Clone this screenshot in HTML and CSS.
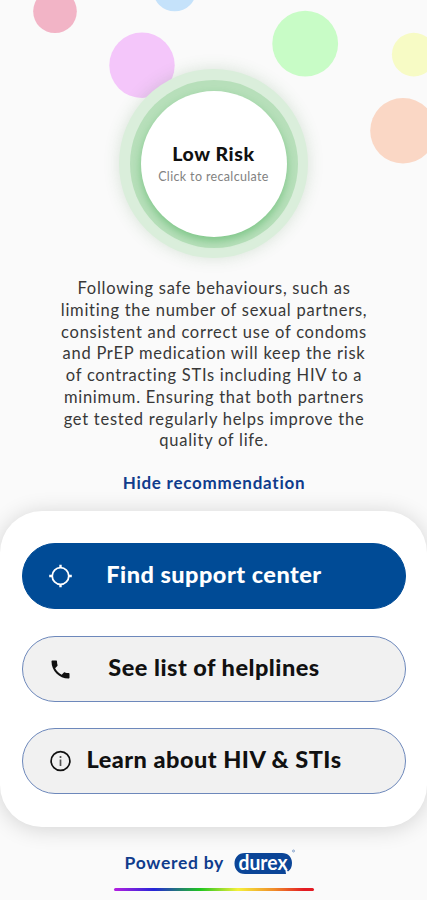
FILE: index.html
```
<!DOCTYPE html>
<html lang="en">
<head>
  <meta charset="UTF-8" />
  <meta name="viewport" content="width=device-width, initial-scale=1.0" />
  <title>Risk calculator</title>
  <link rel="stylesheet" href="styles.css">
</head>
<body>
<div class="bubbles">
  <svg width="427" height="200" viewBox="0 0 427 200">
    <circle cx="55" cy="11.3" r="21.8" fill="#f2b4c6" />
    <circle cx="174.7" cy="-10.5" r="21.8" fill="#c5e2fa" />
    <circle cx="142" cy="65.3" r="32.7" fill="#f4c6fa" />
    <circle cx="305.2" cy="43.7" r="32.9" fill="#c8fcc6" />
    <circle cx="413.7" cy="54.6" r="21.8" fill="#f7fbc5" />
    <circle cx="403" cy="130.7" r="32.8" fill="#fad7c5" />
  </svg>
</div>
<main>
  <div class="risk">
    <div class="ring">
      <div class="inner">
        <h1>Low Risk</h1>
        <p>Click to recalculate</p>
      </div>
    </div>
  </div>
  <p class="advice">
    Following safe behaviours, such as<br>
    limiting the number of sexual partners,<br>
    consistent and correct use of condoms<br>
    and PrEP medication will keep the risk<br>
    of contracting STIs including HIV to a<br>
    minimum. Ensuring that both partners<br>
    get tested regularly helps improve the<br>
    quality of life.
  </p>
  <a class="toggle">Hide recommendation</a>
  <section class="card">
    <a class="btn primary">
      <svg width="24" height="24" viewBox="0 0 24 24" fill="none" stroke="currentColor" stroke-width="1.8">
        <circle cx="12.5" cy="12" r="8.3" />
        <path d="M12.5 .7v3M12.5 20.300v3M1.200 12h3M20.800 12h3" stroke-width="2.4" />
      </svg>
      <span>Find support center</span>
    </a>
    <a class="btn">
      <svg width="24" height="24" viewBox="0 0 24 24" fill="currentColor">
        <path transform="translate(.5 .5)" d="M20 15.500c-1.200 0-2.400-.2-3.600-.6-.3-.1-.7 0-1 .2l-2.200 2.200c-2.800-1.400-5.100-3.800-6.600-6.600l2.200-2.200c.3-.3.4-.7.2-1C8.700 6.400 8.500 5.200 8.500 4c0-.6-.4-1-1-1H4c-.6 0-1 .4-1 1 0 9.400 7.600 17 17 17 .6 0 1-.4 1-1v-3.500c0-.6-.4-1-1-1z" />
      </svg>
      <span>See list of helplines</span>
    </a>
    <a class="btn">
      <svg width="24" height="24" viewBox="0 0 24 24" fill="none" stroke="currentColor" stroke-width="1.7">
        <circle cx="12.5" cy="12" r="9.4" />
        <path d="M12.5 10.500v6.500M12.500 7v2" stroke="#555" />
      </svg>
      <span>Learn about HIV &amp; STIs</span>
    </a>
  </section>
  <footer>
    <div class="powered">
      <span>Powered by</span>
      <svg width="62" height="28" viewBox="0 0 62 28">
        <path d="M11 5h37c6 0 10 4 10 10 0 4-1.500 7-4 8.500l-3-4 1 6.500H11C4 26 .5 21 .5 15.500S4 5 11 5z" fill="#0b4597" />
        <text x="4.5" y="22" textLength="49" lengthAdjust="spacingAndGlyphs">durex</text>
        <circle cx="59.500" cy="3" r="1" fill="none" stroke="#6c8fc2" stroke-width=".8" />
      </svg>
    </div>
    <div class="rainbow"></div>
  </footer>
</main>
</body>
</html>
```
FILE: styles.css
```
* {
  margin: 0;
  padding: 0;
  box-sizing: border-box;
}
body {
  height: 900px;
  background: #fafafa;
  font-family: Lato, "Liberation Sans", sans-serif;
  color: #111;
  overflow: hidden;
}
.bubbles {
  position: absolute;
  top: 0;
  left: 0;
}
main {
  position: relative;
  display: flex;
  flex-direction: column;
  align-items: center;
  height: 900px;
  padding-top: 69px;
}
.risk,
.ring,
.inner {
  display: flex;
  align-items: center;
  justify-content: center;
  flex-shrink: 0;
  border-radius: 50%;
}
.risk {
  width: 189px;
  height: 189px;
  background: #daeedb;
  box-shadow: 0 0 16px rgba(60, 120, 60, 0.18);
}
.ring {
  width: 168px;
  height: 168px;
  background: #b7dfba;
}
.inner {
  flex-direction: column;
  width: 146px;
  height: 146px;
  background: #fff;
  box-shadow: 0 4px 9px rgba(40, 160, 60, 0.4);
}
.inner h1 {
  padding-top: 2px;
  font-size: 19.5px;
  line-height: 24px;
  font-weight: 900;
  letter-spacing: 0.6px;
}
.inner p {
  padding-top: 1px;
  font-size: 12.5px;
  line-height: 20px;
  letter-spacing: 0.35px;
  color: #828282;
}
.advice {
  margin-top: 20px;
  padding-left: 1px;
  font-size: 16.5px;
  line-height: 21.75px;
  text-align: center;
  white-space: nowrap;
  letter-spacing: 0.74px;
  color: #383838;
}
.toggle {
  margin-top: 20px;
  padding-left: 1px;
  font-size: 17px;
  line-height: 22px;
  font-weight: 700;
  letter-spacing: 0.75px;
  color: #103c8c;
}
.card {
  display: flex;
  flex-direction: column;
  gap: 26.5px;
  flex-shrink: 0;
  width: 427px;
  height: 316px;
  margin-top: 17px;
  padding: 32px 21px 0 22px;
  border-radius: 42px;
  background: #fff;
  box-shadow: 0 2px 22px rgba(0, 0, 0, 0.16);
}
.btn {
  display: flex;
  align-items: center;
  height: 66px;
  padding: 0 25px;
  border: 1px solid #6d88bb;
  border-radius: 33px;
  background: #f1f1f1;
  color: #111;
}
.btn span {
  flex: 1;
  margin: -4px 24px 0 0;
  font-size: 23.5px;
  font-weight: 900;
  text-align: center;
  white-space: nowrap;
  letter-spacing: 0.48px;
}
.btn.primary {
  background: #004b96;
  border-color: #004b96;
  color: #fff;
}
.powered {
  display: flex;
  align-items: center;
  margin-top: 21px;
  padding-left: 11px;
  font-size: 17.5px;
  font-weight: 700;
  letter-spacing: 0.72px;
  color: #103c8c;
}
.powered svg {
  margin-left: 10.5px;
}
.powered text {
  font-family: Lato, sans-serif;
  font-size: 21px;
  font-weight: 700;
  letter-spacing: 0;
  fill: #fff;
}
.rainbow {
  width: 200px;
  height: 3px;
  margin-top: 12px;
  border-radius: 2px;
  background: linear-gradient(90deg, #b51fe0, #2525d8 20%, #20c520 43%, #f5f03a 62%, #f08c2a 80%, #e31b23 95%);
}
```
